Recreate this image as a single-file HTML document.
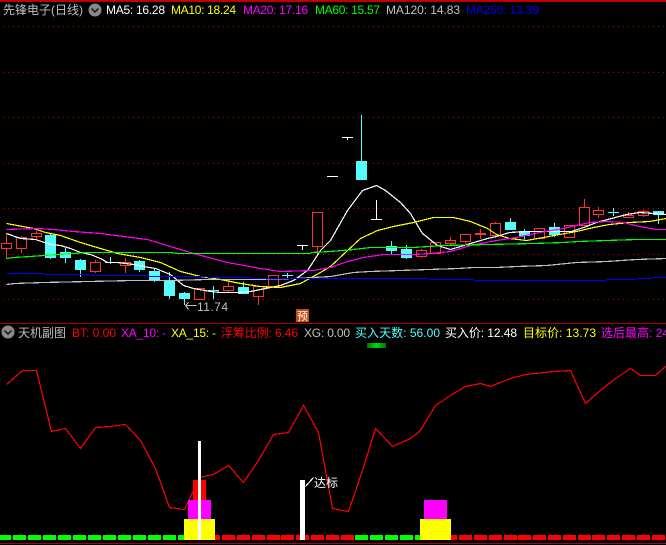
<!DOCTYPE html>
<html><head><meta charset="utf-8"><style>
html,body{margin:0;padding:0;background:#000;width:666px;height:545px;overflow:hidden}
svg{display:block}
text{font-family:"Liberation Sans","Noto Sans CJK SC","WenQuanYi Zen Hei",sans-serif;font-size:12px}
</style></head><body>
<svg width="666" height="545" viewBox="0 0 666 545" xmlns="http://www.w3.org/2000/svg">
<defs><linearGradient id="g"><stop offset="0" stop-color="#007000"/><stop offset=".5" stop-color="#00e000"/><stop offset="1" stop-color="#007000"/></linearGradient></defs>
<rect width="666" height="545" fill="#000"/>
<g shape-rendering="crispEdges">
<rect x="0" y="0" width="666" height="2" fill="#c00000"/>
<rect x="0" y="323" width="666" height="1" fill="#a80000"/>
<rect x="0" y="543" width="666" height="1" fill="#a80000"/>
<g stroke="#c00000" stroke-width="1" stroke-dasharray="1 4" fill="none">
<path d="M3 26.5H666M3 72.5H666M3 117.5H666M3 163.5H666M3 208.5H666M3 254.5H666M3 299.5H666"/>
</g>
<!-- red candles -->
<path fill="#000" stroke="#ff3232" d="M1.5 243.5h10V248.5h-10zM6.5 233V243M6.5 249V259
M16.5 237.5h10V248.5h-10zM21.5 236V237M21.5 249V253
M31.5 233.5h10V236.5h-10zM36.5 231V233M36.5 237V239
M90.5 262.5h10V271.5h-10zM95.5 260V262M95.5 272V273
M120.5 262.5h10V265.5h-10zM125.5 258V262M125.5 266V273
M194.5 288.5h10V299.5h-10z
M223.5 286.5h10V290.5h-10zM228.5 280V286M228.5 291V292
M253.5 286.5h10V296.5h-10zM258.5 297V305
M268.5 275.5h10V286.5h-10z
M312.5 212.5h10V246.5h-10zM317.5 247V255
M416.5 250.5h10V256.5h-10zM421.5 249V250M421.5 257V258
M430.5 242.5h10V253.5h-10z
M445.5 240.5h10V243.5h-10zM450.5 237V240M450.5 244V245
M460.5 234.5h10V241.5h-10zM465.5 242V244
M480.5 229V239M475 234.5h11
M490.5 223.5h10V235.5h-10zM495.5 222V223
M534.5 228.5h10V238.5h-10z
M564.5 225.5h10V237.5h-10z
M579.5 207.5h10V225.5h-10zM584.5 199V207
M593.5 210.5h10V214.5h-10zM598.5 207V210M598.5 215V218
M623.5 215.5h10V217.5h-10zM628.5 212V215
M638.5 211.5h10V215.5h-10zM643.5 210V211M643.5 216V217"/>
<rect x="475" y="233" width="11" height="2" fill="#ff3232"/>
<!-- cyan candles -->
<g fill="#54fcfc">
<rect x="45" y="235" width="11" height="23"/><rect x="50" y="233" width="1" height="26"/>
<rect x="60" y="252" width="11" height="6"/><rect x="65" y="248" width="1" height="15"/>
<rect x="75" y="260" width="11" height="10"/><rect x="80" y="259" width="1" height="18"/>
<rect x="105" y="262" width="11" height="1"/><rect x="110" y="257" width="1" height="7"/>
<rect x="134" y="261" width="11" height="9"/><rect x="139" y="260" width="1" height="12"/>
<rect x="149" y="271" width="11" height="9"/><rect x="154" y="269" width="1" height="13"/>
<rect x="164" y="280" width="11" height="16"/><rect x="169" y="272" width="1" height="27"/>
<rect x="179" y="293" width="11" height="6"/><rect x="184" y="292" width="1" height="13"/>
<rect x="208" y="290" width="11" height="1"/><rect x="213" y="286" width="1" height="13"/>
<rect x="238" y="287" width="11" height="7"/><rect x="243" y="282" width="1" height="12"/>
<rect x="282" y="275" width="11" height="1"/><rect x="287" y="273" width="1" height="5"/>
<rect x="356" y="161" width="11" height="19"/><rect x="361" y="115" width="1" height="46"/>
<rect x="386" y="246" width="11" height="5"/><rect x="391" y="241" width="1" height="13"/>
<rect x="401" y="249" width="11" height="9"/><rect x="406" y="245" width="1" height="14"/>
<rect x="505" y="222" width="11" height="8"/><rect x="510" y="218" width="1" height="4"/>
<rect x="519" y="231" width="11" height="5"/><rect x="524" y="229" width="1" height="10"/>
<rect x="549" y="227" width="11" height="8"/><rect x="554" y="223" width="1" height="14"/>
<rect x="608" y="212" width="11" height="1"/><rect x="613" y="208" width="1" height="8"/>
<rect x="653" y="211" width="11" height="4"/><rect x="658" y="211" width="1" height="13"/>
</g>
<!-- white doji -->
<g fill="#fff">
<rect x="297" y="245" width="11" height="1"/><rect x="302" y="245" width="1" height="5"/>
<rect x="327" y="176" width="11" height="1"/>
<rect x="342" y="137" width="11" height="1"/><rect x="347" y="137" width="1" height="3"/>
<rect x="371" y="219" width="11" height="1"/><rect x="376" y="200" width="1" height="19"/>
</g>
<!-- moving averages -->
<g fill="none" stroke-width="1.2" transform="translate(.5 .5)">
<polyline stroke="#fff" points="6,233 20,238 35,239 50,244 60,245 70,248 80,252 90,254 100,258 107,262 117,262 133,264 143,266 155,268 170,274 183,285 193,288 210,291 220,292 237,292 250,291 265,288 280,285 293,280 307,270 320,250 330,240 347,210 362,190 376,185 385,190 400,202 410,213 422,233 437,245 450,249 470,243 487,238 496,236 509,232 526,231 546,231 571,231 586,226 596,222 611,218 626,214 639,212 653,213 666,214"/>
<polyline stroke="#ffff00" points="6,223 33,228 45,232 60,235 80,242 100,248 117,253 140,257 160,262 180,271 200,276 220,279 240,283 260,286 280,287 300,283 320,272 330,266 347,250 360,238 377,230 393,226 413,222 433,217 453,217 470,221 487,228 496,234 509,238 526,240 543,237 559,234 576,231 593,227 609,224 629,222 649,221 666,218"/>
<polyline stroke="#ff00ff" points="6,229 37,228 53,229 73,231 100,233 123,236 147,239 160,243 193,253 227,262 260,268 280,271 313,270 330,267 347,261 363,257 383,254 413,254 430,253 450,251 470,245 496,240 516,237 539,232 563,228 589,222 606,221 623,222 639,226 656,229 666,229"/>
<polyline stroke="#00ff00" points="6,258 13,257 30,256 43,255 58,254 73,253 88,252 170,252 177,253 310,253 311,252 330,251 353,249 370,247 413,247 443,245 487,244 533,243 563,242 578,241 606,240 636,239 666,239"/>
<polyline stroke="#c0c0c0" points="6,284 14,283 43,282 88,281 132,280 170,280 207,279 250,279 295,278 330,276 353,272 369,271 399,270 428,269 458,268 473,267 496,267 516,266 546,265 576,262 606,261 621,260 636,259 666,258"/>
<path stroke="#0000f0" d="M6 273H43M43 274H88M88 275H147M147 276H207M207 277H250M250 278H429M429 279H473M473 280H606M606 279H636M636 278H651M651 277H666"/>
<!-- arrow near 11.74 -->
<path stroke="#c0c0c0" d="M185 305H196M185 305L188 302M185 305L188 309"/>
<!-- lower line -->
<polyline stroke="#ff0000" points="6,384 22,370 36,370 51,431 65,428 80,448 95,427 110,426 125,424 140,440 155,468 169,507 184,509 199,477 213,474 228,465 243,482 258,460 273,434 288,432 303,405 318,432 332,508 348,511 362,470 375,428 392,446 410,438 420,430 435,405 450,395 465,386 480,383 490,386 510,378 525,374 553,371 570,370 585,403 600,390 615,378 630,368 640,375 655,375 666,365"/>
<path stroke="#fff" d="M313 477L305 486"/>
</g>
<!-- bottom strip -->
<g fill="#00ff00">
<rect x="0" y="535" width="11" height="5"/><rect x="13" y="535" width="13" height="5"/><rect x="28" y="535" width="13" height="5"/><rect x="43" y="535" width="13" height="5"/><rect x="58" y="535" width="13" height="5"/><rect x="73" y="535" width="13" height="5"/><rect x="88" y="535" width="13" height="5"/><rect x="103" y="535" width="13" height="5"/><rect x="118" y="535" width="13" height="5"/><rect x="133" y="535" width="13" height="5"/><rect x="148" y="535" width="13" height="5"/><rect x="163" y="535" width="13" height="5"/><rect x="178" y="535" width="6" height="5"/>
<rect x="355" y="535" width="13" height="5"/><rect x="370" y="535" width="13" height="5"/><rect x="385" y="535" width="13" height="5"/><rect x="400" y="535" width="13" height="5"/><rect x="415" y="535" width="5" height="5"/>
</g>
<g fill="#ff0000">
<rect x="215" y="535" width="5" height="5"/><rect x="222" y="535" width="13" height="5"/><rect x="237" y="535" width="13" height="5"/><rect x="252" y="535" width="13" height="5"/><rect x="267" y="535" width="13" height="5"/><rect x="281" y="535" width="13" height="5"/><rect x="296" y="535" width="13" height="5"/><rect x="311" y="535" width="13" height="5"/><rect x="326" y="535" width="13" height="5"/><rect x="341" y="535" width="13" height="5"/>
<rect x="451" y="535" width="6" height="5"/><rect x="459" y="535" width="13" height="5"/><rect x="474" y="535" width="13" height="5"/><rect x="489" y="535" width="13" height="5"/><rect x="504" y="535" width="13" height="5"/><rect x="518" y="535" width="13" height="5"/><rect x="533" y="535" width="13" height="5"/><rect x="548" y="535" width="13" height="5"/><rect x="563" y="535" width="13" height="5"/><rect x="578" y="535" width="13" height="5"/><rect x="592" y="535" width="13" height="5"/><rect x="607" y="535" width="13" height="5"/><rect x="622" y="535" width="13" height="5"/><rect x="637" y="535" width="13" height="5"/><rect x="652" y="535" width="13" height="5"/>
</g>
<!-- stacked bars -->
<rect x="193" y="480" width="13" height="20" fill="#ff0000"/>
<rect x="188" y="500" width="23" height="19" fill="#ff00ff"/>
<rect x="184" y="519" width="31" height="21" fill="#ffff00"/>
<rect x="198" y="441" width="3" height="99" fill="#fff"/>
<rect x="300" y="480" width="5" height="60" fill="#fff"/>
<rect x="424" y="500" width="23" height="19" fill="#ff00ff"/>
<rect x="420" y="519" width="31" height="21" fill="#ffff00"/>
<rect x="367" y="343" width="19" height="5" fill="url(#g)"/>
<!-- badge -->
<rect x="296" y="309" width="13" height="13" fill="#c04c12"/>
</g>
<text x="297" y="320" fill="#fff" style="font-size:11px">预</text>
<!-- icons -->
<circle cx="95" cy="10" r="6.5" fill="#8a8a8a"/>
<path d="M91.5 8.5L95 12L98.5 8.5" fill="none" stroke="#222" stroke-width="1.6"/>
<circle cx="8" cy="332" r="6.5" fill="#8a8a8a"/>
<path d="M4.5 330.5L8 334L11.5 330.5" fill="none" stroke="#222" stroke-width="1.6"/>
<!-- top legend -->
<text x="3" y="14" fill="#c0c0c0" textLength="80">先锋电子(日线)</text>
<text x="106" y="14" fill="#fff" textLength="59">MA5: 16.28</text>
<text x="171" y="14" fill="#ffff00" textLength="65">MA10: 18.24</text>
<text x="243" y="14" fill="#ff00ff" textLength="65">MA20: 17.16</text>
<text x="315" y="14" fill="#00ff00" textLength="65">MA60: 15.57</text>
<text x="386" y="14" fill="#c0c0c0" textLength="74">MA120: 14.83</text>
<text x="466" y="14" fill="#0000f0" textLength="73">MA250: 13.39</text>
<!-- lower legend -->
<text x="18" y="337" fill="#c0c0c0">天机副图</text>
<text x="72" y="337" fill="#ff0000" textLength="44">BT: 0.00</text>
<text x="121" y="337" fill="#ff00ff" textLength="45">XA_10: -</text>
<text x="171" y="337" fill="#ffff00" textLength="45">XA_15: -</text>
<text x="221" y="337" fill="#ff0000" textLength="77">浮筹比例: 6.46</text>
<text x="304" y="337" fill="#c0c0c0" textLength="46">XG: 0.00</text>
<text x="355" y="337" fill="#54fcfc" textLength="85">买入天数: 56.00</text>
<text x="445" y="337" fill="#fff" textLength="72">买入价: 12.48</text>
<text x="523" y="337" fill="#ffff00" textLength="73">目标价: 13.73</text>
<text x="601" y="337" fill="#ff00ff">选后最高: 24.00</text>
<!-- labels -->
<text x="197" y="311" fill="#c0c0c0" textLength="31">11.74</text>
<text x="314" y="487" fill="#fff">达标</text>
</svg>
</body></html>
